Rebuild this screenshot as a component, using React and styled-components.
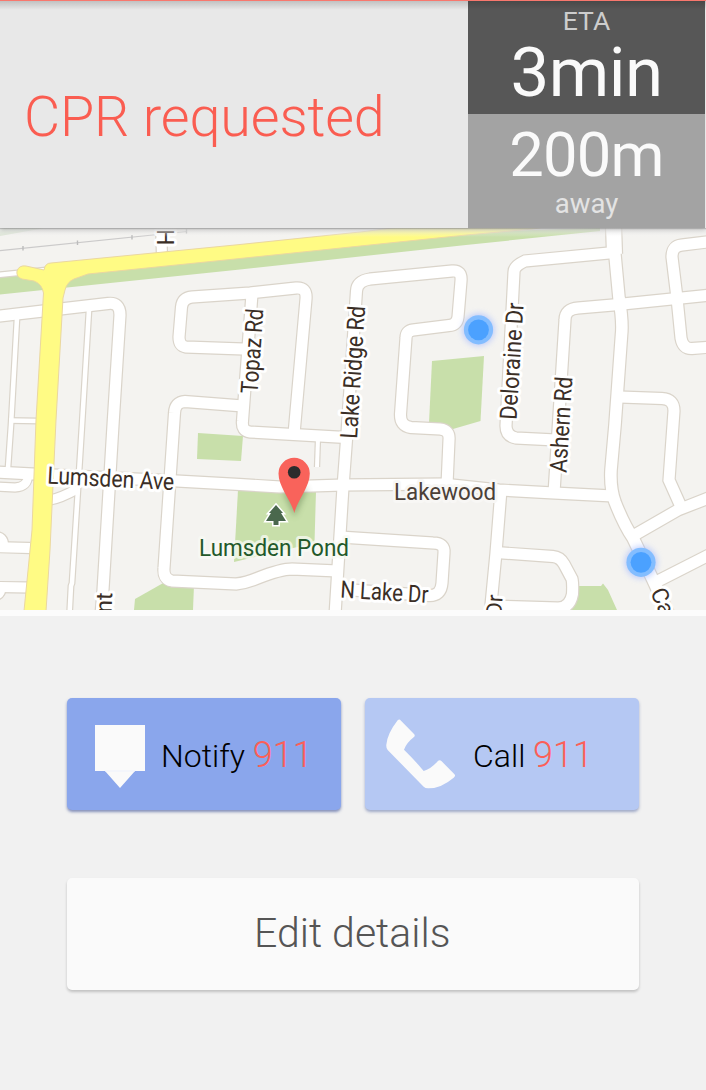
import React from "react";
import styled, { createGlobalStyle } from "styled-components";

const GlobalStyle = createGlobalStyle`
  *, *::before, *::after { box-sizing: border-box; }
  body { margin: 0; background: #f1f1f1; font-family: Roboto, "Liberation Sans", sans-serif; }
`;

const Screen = styled.main`
  width: 706px;
  height: 1090px;
  overflow: hidden;
  display: flex;
  flex-direction: column;
  background: #f1f1f1;
`;

const Header = styled.header`
  position: relative;
  z-index: 1;
  display: flex;
  height: 228px;
  padding-right: 1px;
  flex: none;
  background: #e8e8e8;
  border-top: 1px solid #f8776d;
  box-shadow: 0 1px 1px rgba(0, 0, 0, 0.16), 0 2px 5px rgba(0, 0, 0, 0.2);

  &::after {
    content: "";
    position: absolute;
    inset: 0 0 auto;
    height: 9px;
    background: linear-gradient(rgba(0, 0, 0, 0.17), rgba(0, 0, 0, 0));
  }
`;

const Title = styled.h1`
  flex: 1;
  margin: 0;
  padding: 83px 0 0 24px;
  font-size: 55.6px;
  line-height: 66px;
  font-weight: 300;
  letter-spacing: -0.12px;
  color: #fa5d51;
  white-space: nowrap;
`;

const Stats = styled.aside`
  width: 237px;
  display: flex;
  flex-direction: column;
`;

const Stat = styled.div`
  height: ${(p) => p.$height}px;
  padding-top: ${(p) => p.$top}px;
  background: ${(p) => p.$tone};
  text-align: center;
`;

const Caption = styled.div`
  font-size: ${(p) => p.$size}px;
  line-height: ${(p) => p.$line}px;
  color: ${(p) => p.$color};
`;

const Figure = styled.div`
  font-size: ${(p) => p.$size}px;
  line-height: ${(p) => p.$line}px;
  letter-spacing: ${(p) => p.$spacing || 0}px;
  color: #fafafa;
`;

const MapFrame = styled.section`
  height: 388px;
  flex: none;
  border-bottom: 6px solid #fcfcfc;
`;

const MapCanvas = styled.svg`
  display: block;
  width: 706px;
  height: 382px;
  background: #f4f3f0;
`;

const Label = styled.text`
  font-family: Roboto, sans-serif;
  font-size: ${(p) => p.$size || 24}px;
  fill: ${(p) => p.$fill || "#3a2e26"};
  stroke: ${(p) => p.$halo || "#fff"};
  stroke-width: 6px;
  stroke-linejoin: round;
  paint-order: stroke;
`;

const Actions = styled.section`
  display: grid;
  grid-template-columns: 273.5px 273.5px;
  grid-template-rows: 112px 112px;
  gap: 68px 24.5px;
  padding: 82px 67px 0;
`;

const Button = styled.button`
  display: flex;
  align-items: flex-start;
  justify-content: ${(p) => (p.$wide ? "center" : "flex-start")};
  grid-column: ${(p) => (p.$wide ? "1 / -1" : "auto")};
  border: 0;
  border-radius: 5px;
  margin: 0;
  padding: ${(p) => p.$pad};
  background: ${(p) => p.$bg};
  box-shadow: 0 2px 3px ${(p) => p.$shadow};
  font-family: inherit;
  font-weight: 300;
  white-space: nowrap;
`;

const ButtonText = styled.span`
  margin-left: ${(p) => p.$left}px;
  padding-top: ${(p) => p.$top}px;
  font-size: ${(p) => p.$size}px;
  line-height: 44px;
  color: ${(p) => p.$color};
`;

const Number911 = styled.span`
  font-size: 36px;
  color: #fc5f58;
`;

const ButtonIcon = styled.svg`
  display: block;
  flex: none;
  fill: #fafafa;
`;

const parks = [
  "M0 277 L240 252 L470 232 L600 228 L600 231 L466 245 L240 269.5 L0 294.5Z",
  "M432 361 L484 356 L480.500 421 L453 429 L429 423Z",
  "M198 433 L243 436 L241 461 L197 459Z",
  "M238 490 L316 491 L314.500 543 L234 562Z",
  "M135 599 L165 582 L194 585 L193 610 L134 610Z",
  "M577 586 L601 586 L603 583.500 L608 590 L617 610 L570 610Z",
];

const roads = [
  { w: 11, d: "M-5 316.500 L43 311 L108 303.500 Q120 302 120 315 L113 425 L103 590 L101 615" },
  { w: 4.5, d: "M17 318 L11 425 L8 468" },
  { w: 4.5, d: "M89 310 L82 425 L77.500 497 L72 583 L71 586 L69.500 615" },
  { w: 4.5, d: "M9 420.500 L38 421" },
  { w: 4.5, d: "M-3 275 L46 270" },
  { w: 10, d: "M161 225 L162 256" },
  { w: 11, d: "M243 349 L186 347 Q179 346 179 337 L181.500 307 Q182.500 298 192 297 L250 293 L296 288 Q307 287 306 299 L294 434" },
  { w: 11, d: "M252 294 L242.500 421 Q241.500 431 250 432 L346 437.500" },
  { w: 11, d: "M243 406 L185 401.500 Q175 402 174.500 413 L164 568 Q163 579 172 581 L236 584 Q246 583 258 578 Q281 569 292 569 L338 571" },
  { w: 11, d: "M447 485 L449 440 Q450 430 440 429 L411 427.500 Q400 426 400.500 414 L406 338 Q406 331 413 330 L449 325.500 Q457 325 458 317 L461 281 Q462 270 452 271 L370 279 Q357 281 356.500 291 L346.500 440 L343 487 L335 615" },
  { w: 4, d: "M318 438 L317 467" },
  { w: 11, d: "M-5 472 L33 474 L177 481 L240 484.500 L280 487 L343 485 L443 484 L499 490 L554 493 L613 496" },
  { w: 8, d: "M-5 486.500 L15 487.500 Q28 487 28 475" },
  { w: 9, d: "M50 500 Q61 498 77 489" },
  { w: 10, d: "M-5 547 L30 548" },
  { w: 10, d: "M-5 537 Q3 537 3 545" },
  { w: 10, d: "M-5 587 L28 587.500" },
  { w: 9, d: "M-5 596 Q1 594 1 588" },
  { w: 11, d: "M340 537 L433 543 Q445 543 444 553 L442 583 Q441 596 429 595.500 L338 589" },
  { w: 11, d: "M501 490 L496 553 L490 615" },
  { w: 11, d: "M496 552.500 L553 556.500 Q560 557 564 564 L572 579 Q573 583 572.500 594 Q570 608 558 608 L492 606" },
  { w: 11, d: "M614 252.500 L525 261 Q514 266 514 272 L506 426 Q506 436 516 438 L556 440" },
  { w: 11, d: "M711 295 L613 305 L578 308 Q565 309 565 320 L554 493" },
  { w: 15, d: "M613.500 225 L614.500 254" },
  { w: 11.5, d: "M614.500 250 L619 298 Q623 322 621.500 335 L615 425 L611 470 Q610 488 615 502 Q624 525 633 538 L653 580 L669 615" },
  { w: 11, d: "M711 241.500 L682 245 Q672 246 672 257 L677 298 L681 338 Q683 349 692 348.500 L711 347" },
  { w: 11, d: "M620 397 L662 398.500 Q674 399 674 411 L669 480 L682 509" },
  { w: 11, d: "M631 537 L678 510 L711 497" },
  { w: 11, d: "M652 584 L711 554" },
];

const labels = [
  { t: "Topaz Rd", x: 257.5, y: 394, r: -86, len: 85 },
  { t: "Lake Ridge Rd", x: 357, y: 439, r: -86.5, len: 133 },
  { t: "Deloraine Dr", x: 516.5, y: 420, r: -86.5, len: 117 },
  { t: "Ashern Rd", x: 566.5, y: 473, r: -86.5, len: 96 },
  { t: "Lumsden Ave", x: 47, y: 483.5, r: 3, len: 127 },
  { t: "N Lake Dr", x: 340, y: 597.5, r: 3.5, len: 88 },
  { t: "Lakewood", x: 394, y: 500, r: 0, len: 102, fill: "#4b4038", halo: "#f8f7f5" },
  { t: "Lumsden Pond", x: 199, y: 556, r: 0, len: 150, fill: "#23592a", halo: "rgba(248,250,244,.75)" },
];

const cutLabels = [
  { t: "H", x: 157, y: 229, r: 90, size: 23 },
  { t: "nt", x: 111.5, y: 613, r: -88, size: 23 },
  { t: "Dr", x: 501.5, y: 617, r: -87, size: 22 },
  { t: "Ca", x: 650, y: 592, r: 66, size: 23 },
];

const responders = [
  { x: 478.5, y: 329.8 },
  { x: 641, y: 562.3 },
];

function StreetMap() {
  return (
    <MapCanvas viewBox="0 228 706 382">
      <defs>
        <filter id="glow" x="-50%" y="-50%" width="200%" height="200%">
          <feGaussianBlur stdDeviation="3" />
        </filter>
        <linearGradient id="topFade" x1="0" y1="0" x2="0" y2="1">
          <stop offset="0" stopColor="#f1f1f1" stopOpacity=".85" />
          <stop offset="1" stopColor="#f1f1f1" stopOpacity="0" />
        </linearGradient>
      </defs>
      {parks.map((d) => (
        <path key={d} d={d} fill="#c8dfaa" />
      ))}
      <path d="M0 228 H45 L0 236Z" fill="#dce5d5" />
      <path d="M0 250.700 L187 231.500" stroke="#cbcaca" strokeWidth="1.2" />
      <path d="M23 246 V250.500 M77.500 240.500 V245 M132 235 V239.500 M186.500 229 V233.500" stroke="#bcbcbc" strokeWidth="1.4" />
      <g fill="none" stroke="#dad4ca">
        {roads.map((r) => (
          <path key={r.d} d={r.d} strokeWidth={r.w + 2.4} />
        ))}
      </g>
      <g fill="none" stroke="#fff">
        {roads.map((r) => (
          <path key={r.d} d={r.d} strokeWidth={r.w} />
        ))}
      </g>
      <path
        d="M24 611 L32 530 L36 420 L43.500 293 Q42 284 34 281 L22 279 Q16 277 17 271 Q19 265 26 266 L44 270 Q45 263 51 263 L240 244.500 L363 231.700 L400 227 L545 227 L533 229 L466 235 L240 258.500 L88 274 L74 279 Q67 282 65 290 L63 298 L56 420 L50 550 L46 611Z"
        fill="#fffb84"
        stroke="#ead7a0"
        strokeWidth="1"
      />
      {labels.map((l) => (
        <Label
          key={l.t}
          transform={`translate(${l.x} ${l.y}) rotate(${l.r})`}
          textLength={l.len}
          lengthAdjust="spacingAndGlyphs"
          $fill={l.fill}
          $halo={l.halo}
        >
          {l.t}
        </Label>
      ))}
      {cutLabels.map((l) => (
        <Label key={l.t} transform={`translate(${l.x} ${l.y}) rotate(${l.r})`} $size={l.size}>
          {l.t}
        </Label>
      ))}
      <rect y="228" width="706" height="9" fill="url(#topFade)" />
      <path
        d="M276 505 L283 513 H281 L286 521 H278.500 V525 H273.500 V521 H266 L271 513 H269Z"
        fill="#4a684d"
        stroke="#fff"
        strokeWidth="3"
        paintOrder="stroke"
      />
      <path d="M283 492 L294.500 517 L308 488Z" fill="#456536" opacity=".4" filter="url(#glow)" />
      <path d="M294.300 513 C291 500 278.500 487 278.500 473.500 A15.600 15.600 0 0 1 309.800 473.500 C309.800 487 297.500 500 294.300 513Z" fill="#f9635b" />
      <circle cx="294.200" cy="472.300" r="6.300" fill="#2c2c2c" />
      {responders.map((p) => (
        <g key={p.x}>
          <circle cx={p.x} cy={p.y} r="16" fill="#9fb6ff" opacity=".65" filter="url(#glow)" />
          <circle cx={p.x} cy={p.y} r="14.600" fill="#83bdff" />
          <circle cx={p.x} cy={p.y} r="10.400" fill="#4ba1ff" />
        </g>
      ))}
    </MapCanvas>
  );
}

export default function App() {
  return (
    <Screen>
      <GlobalStyle />
      <Header>
        <Title>CPR requested</Title>
        <Stats>
          <Stat $height={113} $top={4} $tone="#575757">
            <Caption $size={26.5} $line={31} $color="#cdcdcd">ETA</Caption>
            <Figure $size={69} $line={74} $spacing={-0.6}>3min</Figure>
          </Stat>
          <Stat $height={114} $top={8} $tone="#a3a3a3">
            <Figure $size={61.5} $line={66} $spacing={-0.8}>200m</Figure>
            <Caption $size={27.6} $line={32} $color="#e3e3e3">away</Caption>
          </Stat>
        </Stats>
      </Header>
      <MapFrame>
        <StreetMap />
      </MapFrame>
      <Actions>
        <Button $bg="#8aa6ec" $shadow="rgba(60,80,150,.6)" $pad="27px 0 0 28px">
          <ButtonIcon width="50" height="64" viewBox="0 0 50 64">
            <path d="M0 0H50V46H40L25 63L10 46H0Z" />
            <path d="M10 46H40" stroke="#eef2fc" strokeWidth="1" />
          </ButtonIcon>
          <ButtonText $left={16} $top={8} $size={32} $color="#000">
            Notify <Number911>911</Number911>
          </ButtonText>
        </Button>
        <Button $bg="#b5c8f3" $shadow="rgba(80,100,160,.5)" $pad="21px 0 0 20.5px">
          <ButtonIcon width="70" height="70" viewBox="106 103 210 210">
            <path d="M141 107 Q146 102 151 108 L190 148 Q195 153 189 158 Q168 174 160 195 Q188 222 219 259 Q239 254 261 230 Q267 224 273 230 L310 267 Q317 273 309 279 Q270 312 232 311 Q224 311 219 306 L111 196 Q106 191 107 180 Q110 147 141 107Z" />
          </ButtonIcon>
          <ButtonText $left={17.5} $top={14} $size={32} $color="#000">
            Call <Number911>911</Number911>
          </ButtonText>
        </Button>
        <Button $wide $bg="#fafafa" $shadow="rgba(0,0,0,.2)" $pad="0">
          <ButtonText $left={-1} $top={33} $size={41} $color="#555">
            Edit details
          </ButtonText>
        </Button>
      </Actions>
    </Screen>
  );
}
